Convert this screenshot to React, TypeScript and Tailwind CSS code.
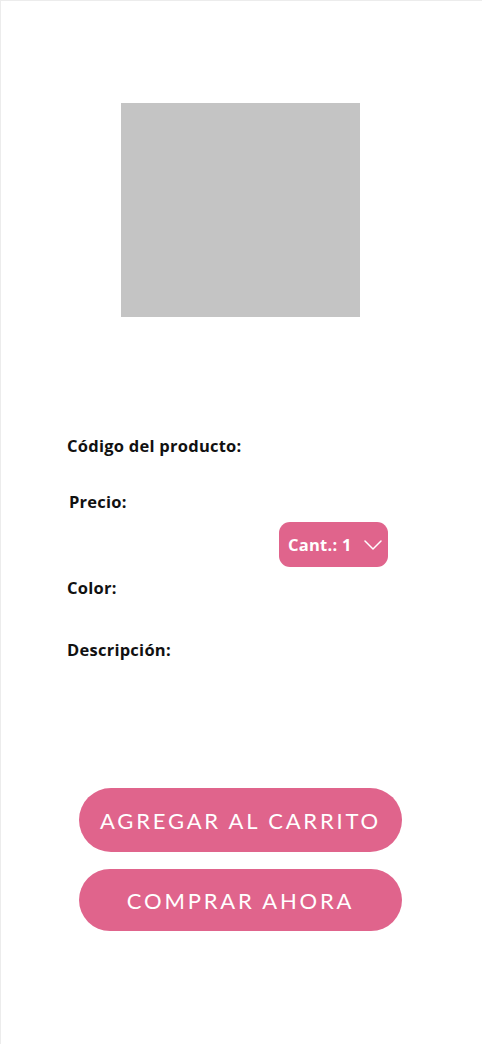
import React from "react";

export default function App() {
  return (
    <div className="w-[482px] h-[1044px] bg-white border-t border-l border-[#ececec] overflow-hidden">
      <div className="pt-[102px] pl-[120px]">
        <div className="w-[239px] h-[214px] bg-[#c4c4c4]" />
      </div>
      <div
        className="flex flex-col mt-[117px] text-[16.5px] tracking-[0.25px] leading-[24px] font-bold text-[#111]"
        style={{ fontFamily: "'Open Sans', Lato, sans-serif" }}
      >
        <div className="pl-[66px]">Código del producto:</div>
        <div className="pl-[68px] mt-[32px]">Precio:</div>
        <div className="flex pl-[278px] mt-[8px]">
          <button className="flex items-center h-[45px] w-[109px] rounded-[11px] bg-[#e0648c] text-white text-[16.5px] tracking-[0.25px] font-bold pl-[9px] gap-[12px]">
            <span>Cant.: 1</span>
            <svg width="18" height="10" viewBox="0 0 18 10" fill="none">
              <path d="M1 1l8 8 8-8" stroke="white" strokeWidth="1.5" strokeLinecap="round" strokeLinejoin="round" />
            </svg>
          </button>
        </div>
        <div className="pl-[66px] mt-[9px]">Color:</div>
        <div className="pl-[66px] mt-[38px]">Descripción:</div>
      </div>
      <div
        className="flex flex-col items-start pl-[78px] mt-[126px] gap-[17px]"
        style={{ fontFamily: "Lato, 'Open Sans', sans-serif" }}
      >
        <button className="w-[323px] h-[64px] rounded-full bg-[#e0648c] text-white text-[22px] tracking-[2.8px] font-normal flex items-center justify-center">
          AGREGAR AL CARRITO
        </button>
        <button className="w-[323px] h-[62px] rounded-full bg-[#e0648c] text-white text-[22px] tracking-[2.8px] font-normal flex items-center justify-center">
          COMPRAR AHORA
        </button>
      </div>
    </div>
  );
}
